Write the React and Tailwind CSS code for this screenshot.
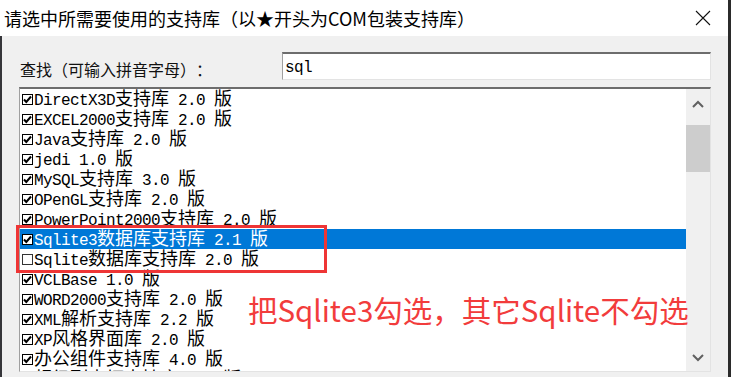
import React from "react"

const items = [
  { text: "DirectX3D支持库 2.0 版", on: true },
  { text: "EXCEL2000支持库 2.0 版", on: true },
  { text: "Java支持库 2.0 版", on: true },
  { text: "jedi 1.0 版", on: true },
  { text: "MySQL支持库 3.0 版", on: true },
  { text: "OPenGL支持库 2.0 版", on: true },
  { text: "PowerPoint2000支持库 2.0 版", on: true },
  { text: "Sqlite3数据库支持库 2.1 版", on: true, selected: true },
  { text: "Sqlite数据库支持库 2.0 版", on: false },
  { text: "VCLBase 1.0 版", on: true },
  { text: "WORD2000支持库 2.0 版", on: true },
  { text: "XML解析支持库 2.2 版", on: true },
  { text: "XP风格界面库 2.0 版", on: true },
  { text: "办公组件支持库 4.0 版", on: true },
  { text: "超级列表框支持库 1.0 版", on: true },
]

const CJK = /[\u2605\u3000-\u9fff\uff00-\uffef]/

// latin runs in a mono face, chinese runs at full width
const Mixed = ({ text }) =>
  text
    .split(/([\u3000-\u9fff\uff00-\uffef]+)/)
    .filter(Boolean)
    .map((p, i) =>
      CJK.test(p) ? (
        <span key={i} className="font-['Noto_Sans_CJK_SC',sans-serif] text-[18px]">
          {p}
        </span>
      ) : (
        <span key={i} className="font-['Liberation_Mono',monospace] text-[16px] tracking-[-0.6px] whitespace-pre">
          {p}
        </span>
      )
    )

const Check = ({ on }) => (
  <svg width="11" height="11" viewBox="0 0 11 11" className="shrink-0">
    <rect x="0.5" y="0.5" width="10" height="10" fill="#fff" stroke={on ? "#000" : "#333"} />
    {on && <path d="M2 5.5 L4.3 8 L9 2.5" fill="none" stroke="#000" strokeWidth="2" />}
  </svg>
)

const Chevron = ({ up }) => (
  <svg width="12" height="8" viewBox="0 0 12 8">
    <polyline
      points={up ? "1,7 6,2 11,7" : "1,1 6,6 11,1"}
      fill="none"
      stroke="#606060"
      strokeWidth="2"
    />
  </svg>
)

export default function App() {
  return (
    <div className="relative w-[731px] h-[377px] overflow-hidden flex bg-[#f0f0f0] [text-spacing-trim:space-all]">
      <div className="w-[728px] flex flex-col">
        {/* title bar */}
        <div className="h-[36px] bg-white flex items-center justify-between pl-[4px] pr-[17px]">
          <span className="font-['Noto_Sans_CJK_SC',sans-serif] text-[18px] leading-none text-black">
            请选中所需要使用的支持库（以★开头为COM包装支持库）
          </span>
          <svg width="16" height="16" viewBox="0 0 16 16">
            <path d="M1 1 L15 15 M15 1 L1 15" stroke="#111" strokeWidth="1.1" />
          </svg>
        </div>

        <div className="flex flex-1">
          <div className="w-[2px] bg-[#36363a]" />
          <div className="flex-1 pl-[17px] pr-[17px] pt-[16px] flex flex-col">
            {/* search row */}
            <div className="flex items-center justify-between h-[28px]">
              <span className="pl-[1px] font-['Noto_Sans_CJK_SC',sans-serif] text-[16px] leading-none text-[#111] mt-[6px]">
                查找（可输入拼音字母）：
              </span>
              <div className="w-[429px] h-[28px] bg-white border-t-2 border-t-[#6d6d6d] border-l border-l-[#a0a0a0] border-r border-r-[#e3e3e3] border-b border-b-[#e3e3e3] pl-[2px] leading-[24px]">
                <Mixed text="sql" />
              </div>
            </div>

            {/* library list */}
            <div className="mt-[7px] w-[692px] h-[285px] bg-white flex border-t-2 border-t-[#6d6d6d] border-l border-l-[#a0a0a0] border-r border-r-[#e3e3e3] border-b border-b-[#e3e3e3]">
              <div className="flex-1 overflow-hidden">
                {items.map((it, i) => (
                  <div
                    key={i}
                    className={`h-[20px] flex items-center pl-[2px] ${
                      it.selected ? "bg-[#0078d7] text-white" : "text-black"
                    }`}
                  >
                    <Check on={it.on} />
                    <span className="ml-[1px] leading-[20px] whitespace-nowrap">
                      <Mixed text={it.text} />
                    </span>
                  </div>
                ))}
              </div>
              <div className="w-[24px] bg-[#f0f0f0] flex flex-col">
                <div className="h-[30px] flex items-center justify-center">
                  <Chevron up />
                </div>
                <div className="mt-[6px] h-[47px] bg-[#cdcdcd]" />
                <div className="flex-1" />
                <div className="h-[26px] flex items-center justify-center">
                  <Chevron />
                </div>
              </div>
            </div>
          </div>
        </div>
      </div>
      <div className="w-[3px] bg-[#2b2b2b]" />

      {/* annotation overlays */}
      <div className="absolute left-[16px] top-[225px] w-[311px] h-[48px] border-[3px] border-[#ee3535]" />
      <div className="absolute left-[248px] top-[295px] font-['Noto_Sans_CJK_SC',sans-serif] text-[29.5px] leading-none text-[#f23c3c] whitespace-nowrap">
        把Sqlite3勾选，其它Sqlite不勾选
      </div>
    </div>
  )
}
